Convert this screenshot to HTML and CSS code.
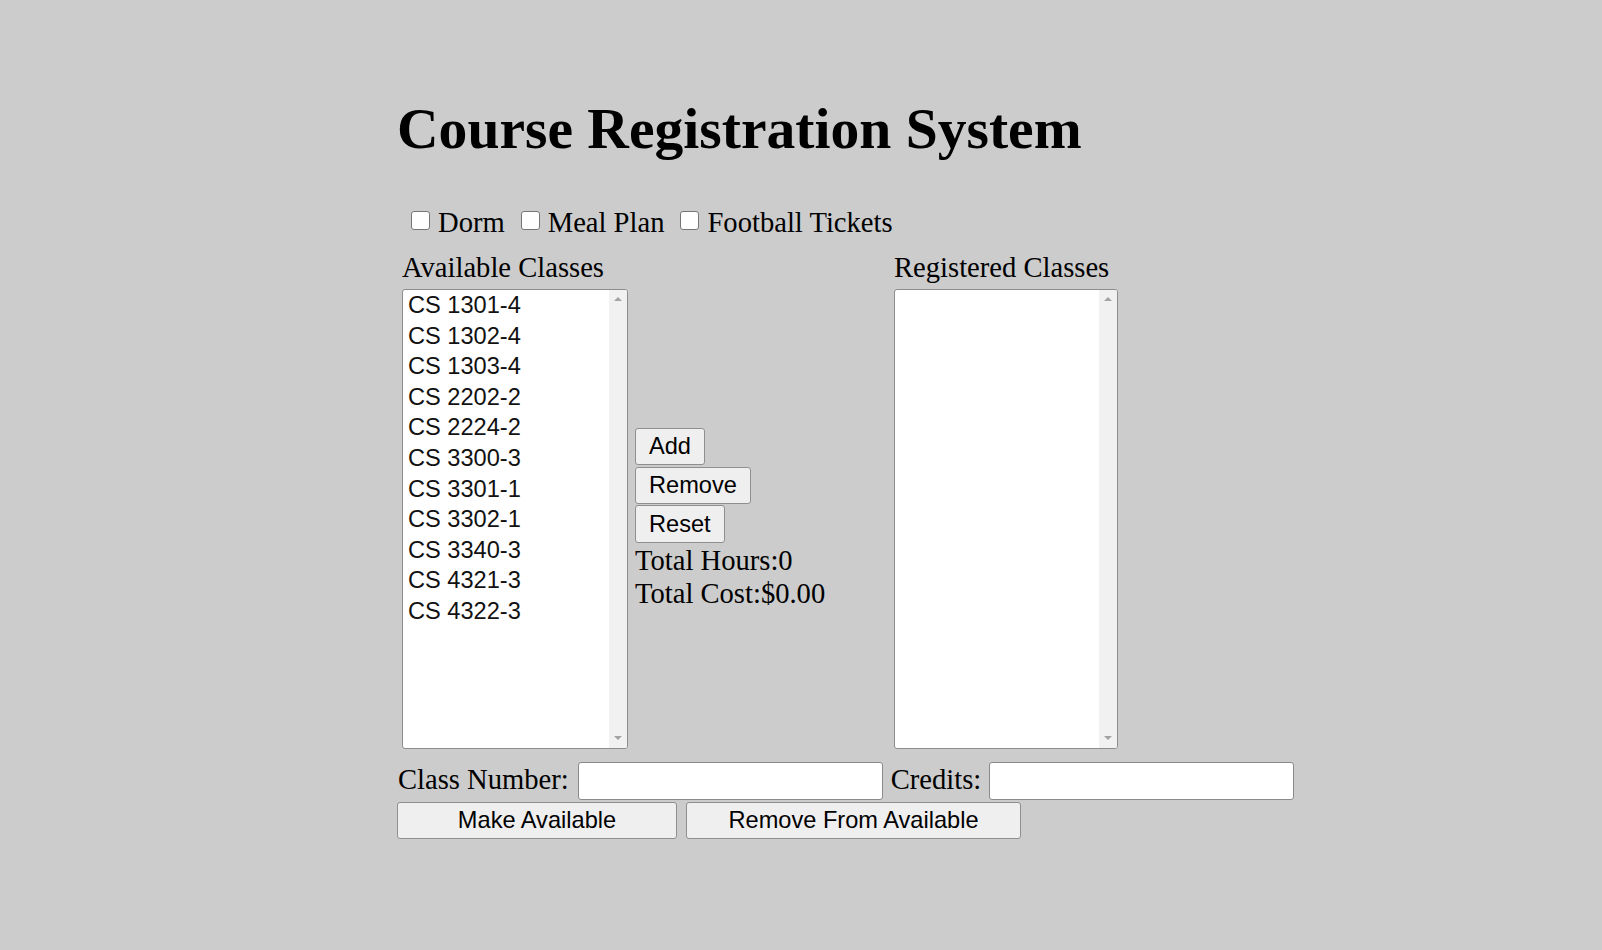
FILE: index.html
```html
<!DOCTYPE html>
<html lang="en">
<head>
<meta charset="utf-8">
<title>Course Registration System</title>
<link rel="stylesheet" href="styles.css">
</head>
<body>
<div class="page">
  <h1 class="title">Course Registration System</h1>

  <div class="extras">
    <label class="extra"><input type="checkbox" class="check">Dorm</label>
    <label class="extra"><input type="checkbox" class="check">Meal Plan</label>
    <label class="extra"><input type="checkbox" class="check">Football Tickets</label>
  </div>

  <div class="board">
    <div class="caption">Available Classes</div>
    <div class="caption"></div>
    <div class="caption">Registered Classes</div>

    <div class="listbox" role="listbox">
      <div class="options">
        <div class="option">CS 1301-4</div>
        <div class="option">CS 1302-4</div>
        <div class="option">CS 1303-4</div>
        <div class="option">CS 2202-2</div>
        <div class="option">CS 2224-2</div>
        <div class="option">CS 3300-3</div>
        <div class="option">CS 3301-1</div>
        <div class="option">CS 3302-1</div>
        <div class="option">CS 3340-3</div>
        <div class="option">CS 4321-3</div>
        <div class="option">CS 4322-3</div>
      </div>
      <div class="scrollbar"><span class="arrow arrow--up"></span><span class="arrow arrow--down"></span></div>
    </div>

    <div class="actions">
      <button class="btn" type="button">Add</button>
      <button class="btn" type="button">Remove</button>
      <button class="btn" type="button">Reset</button>
      <div class="totals">
        <div class="total">Total Hours:0</div>
        <div class="total">Total Cost:$0.00</div>
      </div>
    </div>

    <div class="listbox" role="listbox">
      <div class="options"></div>
      <div class="scrollbar"><span class="arrow arrow--up"></span><span class="arrow arrow--down"></span></div>
    </div>
  </div>

  <div class="entry">
    <label class="field-label field-label--first">Class Number:</label>
    <input type="text" class="field field--class">
    <label class="field-label">Credits:</label>
    <input type="text" class="field field--credits">
  </div>

  <div class="entry-actions">
    <button class="btn btn--wide btn--make" type="button">Make Available</button>
    <button class="btn btn--wide btn--remove" type="button">Remove From Available</button>
  </div>
</div>
</body>
</html>
```

FILE: styles.css
```css
html, body {
  margin: 0;
  padding: 0;
  background: #cccccc;
}

body {
  font-family: "Liberation Serif", "Times New Roman", serif;
  font-size: 28.6px;
  color: #000;
}

.page {
  padding: 96px 0 0 397px;
}

.title {
  margin: 0;
  font-size: 57.6px;
  font-weight: bold;
  line-height: 66px;
  white-space: nowrap;
}

.extras {
  display: flex;
  height: 32px;
  line-height: 32px;
  margin-top: 45px;
  padding-left: 14px;
}

.extra {
  display: flex;
  align-items: center;
  margin-right: 16px;
  white-space: nowrap;
}

.check {
  -webkit-appearance: none;
  appearance: none;
  width: 19px;
  height: 19px;
  margin: 0 8px 5px 0;
  box-sizing: border-box;
  border: 1px solid #767676;
  border-radius: 3px;
  background: #fff;
}

.board {
  display: grid;
  grid-template-columns: 226px 252px 224px;
  column-gap: 7px;
  row-gap: 5px;
  margin: 11px 0 0 5px;
}

.caption {
  line-height: 33px;
  height: 33px;
  padding-top: 1px;
  white-space: nowrap;
}

.listbox {
  height: 460px;
  box-sizing: border-box;
  border: 1px solid #8d8d8d;
  border-radius: 3px;
  background: #fff;
  display: flex;
  overflow: hidden;
}

.options {
  flex: 1;
  padding-left: 5px;
  font-family: "Liberation Sans", Arial, sans-serif;
  font-size: 23.6px;
  line-height: 30.6px;
  color: #111;
}

.option {
  white-space: nowrap;
}

.scrollbar {
  width: 18px;
  background: #f1f1f1;
  display: flex;
  flex-direction: column;
  justify-content: space-between;
  align-items: center;
  padding: 7px 0 8px;
  box-sizing: border-box;
}

.arrow {
  width: 0;
  height: 0;
  border-left: 4px solid transparent;
  border-right: 4px solid transparent;
}

.arrow--up {
  border-bottom: 4px solid #a3a3a3;
}

.arrow--down {
  border-top: 4px solid #a3a3a3;
}

.actions {
  align-self: center;
  display: flex;
  flex-direction: column;
  align-items: flex-start;
  gap: 1.6px;
}

.btn {
  font-family: "Liberation Sans", Arial, sans-serif;
  font-size: 23.6px;
  color: #000;
  background: #efefef;
  border: 1px solid #8f8f8f;
  border-radius: 3px;
  height: 37.4px;
  padding: 0 13px;
  margin: 0;
  box-sizing: border-box;
  white-space: nowrap;
}

.totals {
  line-height: 33px;
  white-space: nowrap;
}

.entry {
  display: flex;
  align-items: center;
  height: 38px;
  margin-top: 13px;
}

.field-label {
  line-height: 33px;
  padding-bottom: 4px;
  white-space: nowrap;
}

.field-label--first {
  margin-left: 1px;
}

.field {
  width: 305px;
  height: 38px;
  box-sizing: border-box;
  border: 1px solid #8a8a8a;
  border-radius: 3px;
  background: #fff;
  margin: 0;
  padding: 0 4px;
  font-family: "Liberation Sans", Arial, sans-serif;
  font-size: 23.6px;
}

.field--class {
  margin: 0 8px 0 9px;
}

.field--credits {
  margin-left: 8px;
}

.entry-actions {
  display: flex;
  gap: 9px;
  margin-top: 2px;
}

.btn--wide {
  height: 37px;
}

.btn--make {
  width: 280px;
}

.btn--remove {
  width: 335px;
}
```
